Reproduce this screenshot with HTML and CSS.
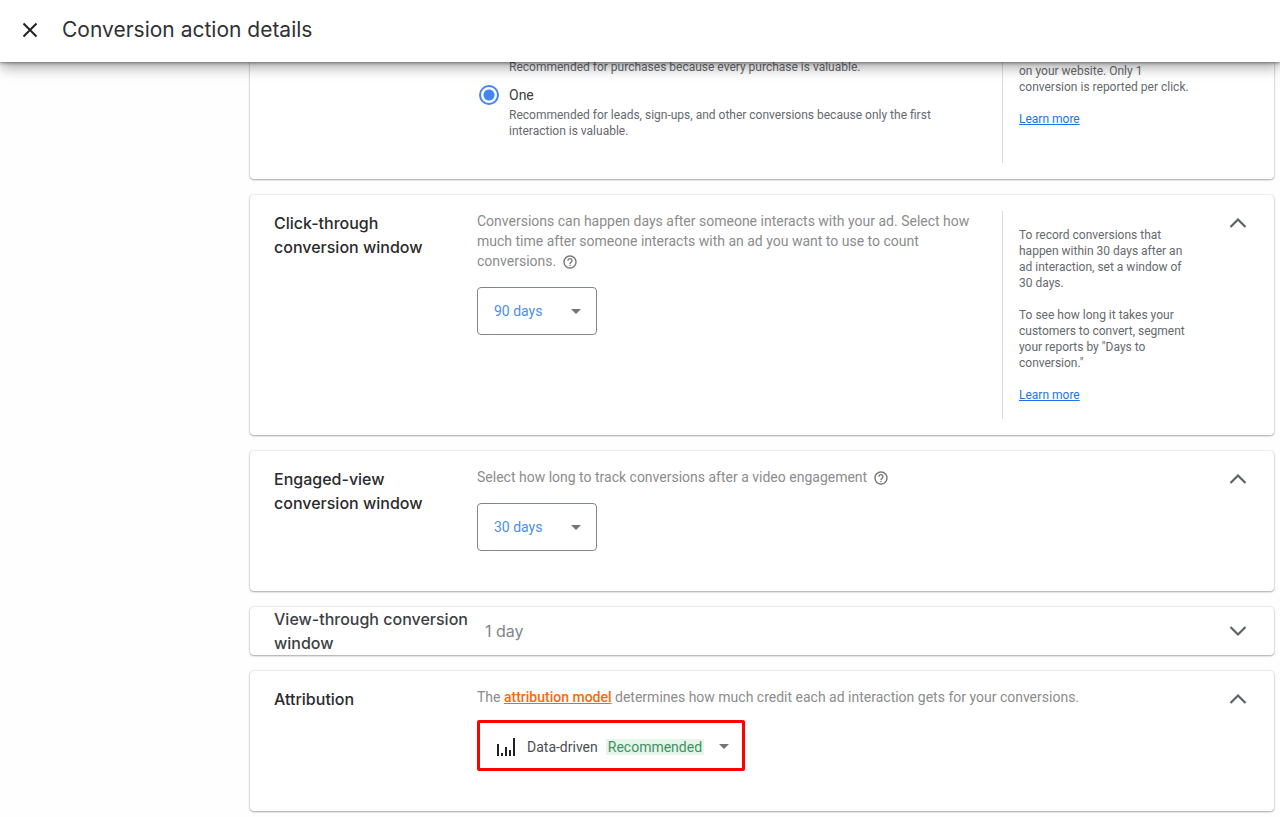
FILE: index.html
```html
<!DOCTYPE html>
<html lang="en">
<head>
    <meta charset="UTF-8">
    <meta name="viewport" content="width=device-width, initial-scale=1.0">
    <title>Conversion action details</title>
    <link rel="stylesheet" href="styles.css">
</head>
<body>

    <header class="top-bar">
        <button class="icon-button" aria-label="Close">
            <svg width="16" height="16" viewBox="0 0 16 16"><path d="M1.5 1.5 L14.5 14.5 M14.5 1.5 L1.5 14.5" fill="none" stroke="#202124" stroke-width="2"/></svg>
        </button>
        <h1>Conversion action details</h1>
    </header>

    <main>
        <!-- Count -->
        <section class="card count-card">
            <div class="card-content">
                <p class="option-note">Recommended for purchases because every purchase is valuable.</p>
                <div class="option">
                    <input type="radio" id="count-one" name="count" checked>
                    <label for="count-one">One</label>
                </div>
                <p class="option-note">Recommended for leads, sign-ups, and other conversions because only the first<br>interaction is valuable.</p>
            </div>
            <aside class="card-help">
                <p>on your website. Only 1<br>conversion is reported per click.</p>
                <a href="#">Learn more</a>
            </aside>
        </section>

        <!-- Click-through conversion window -->
        <section class="card">
            <h2>Click-through<br>conversion window</h2>
            <div class="card-content">
                <p class="description">Conversions can happen days after someone interacts with your ad. Select how<br>much time after someone interacts with an ad you want to use to count<br>conversions. <svg class="help-icon" viewBox="0 0 24 24"><path d="M11 18h2v-2h-2v2zm1-16C6.48 2 2 6.48 2 12s4.48 10 10 10 10-4.48 10-10S17.52 2 12 2zm0 18c-4.41 0-8-3.59-8-8s3.59-8 8-8 8 3.59 8 8-3.59 8-8 8zm0-14c-2.21 0-4 1.79-4 4h2c0-1.1.9-2 2-2s2 .9 2 2c0 2-3 1.75-3 5h2c0-2.25 3-2.5 3-5 0-2.21-1.79-4-4-4z"/></svg></p>
                <div class="select-box">
                    <select aria-label="Click-through conversion window">
                        <option>90 days</option>
                        <option>30 days</option>
                    </select>
                    <span class="arrow"></span>
                </div>
            </div>
            <aside class="card-help">
                <p>To record conversions that<br>happen within 30 days after an<br>ad interaction, set a window of<br>30 days.</p>
                <p>To see how long it takes your<br>customers to convert, segment<br>your reports by "Days to<br>conversion."</p>
                <a href="#">Learn more</a>
            </aside>
            <button class="icon-button toggle" aria-label="Collapse">
                <svg width="18" height="12" viewBox="0 0 18 12"><path d="M1.5 10 L9 2.5 L16.5 10" fill="none" stroke="#5f6368" stroke-width="2.2"/></svg>
            </button>
        </section>

        <!-- Engaged-view conversion window -->
        <section class="card">
            <h2>Engaged-view<br>conversion window</h2>
            <div class="card-content wide">
                <p class="description">Select how long to track conversions after a video engagement <svg class="help-icon" viewBox="0 0 24 24"><path d="M11 18h2v-2h-2v2zm1-16C6.48 2 2 6.48 2 12s4.48 10 10 10 10-4.48 10-10S17.52 2 12 2zm0 18c-4.41 0-8-3.59-8-8s3.59-8 8-8 8 3.59 8 8-3.59 8-8 8zm0-14c-2.21 0-4 1.79-4 4h2c0-1.1.9-2 2-2s2 .9 2 2c0 2-3 1.75-3 5h2c0-2.25 3-2.5 3-5 0-2.21-1.79-4-4-4z"/></svg></p>
                <div class="select-box">
                    <select aria-label="Engaged-view conversion window">
                        <option>30 days</option>
                        <option>3 days</option>
                    </select>
                    <span class="arrow"></span>
                </div>
            </div>
            <button class="icon-button toggle" aria-label="Collapse">
                <svg width="18" height="12" viewBox="0 0 18 12"><path d="M1.5 10 L9 2.5 L16.5 10" fill="none" stroke="#5f6368" stroke-width="2.2"/></svg>
            </button>
        </section>

        <!-- View-through conversion window -->
        <section class="card collapsed">
            <h2>View-through conversion<br>window</h2>
            <p class="summary">1 day</p>
            <button class="icon-button toggle" aria-label="Expand">
                <svg width="18" height="12" viewBox="0 0 18 12"><path d="M1.5 2 L9 9.5 L16.5 2" fill="none" stroke="#5f6368" stroke-width="2.2"/></svg>
            </button>
        </section>

        <!-- Attribution -->
        <section class="card">
            <h2>Attribution</h2>
            <div class="card-content wide">
                <p class="description">The <a class="model-link" href="#">attribution model</a> determines how much credit each ad interaction gets for your conversions.</p>
                <button class="model-button" aria-haspopup="listbox">
                    <svg width="18" height="18" viewBox="0 0 18 18" fill="#202124"><path d="M0 6h2v12H0z M4 15h2v3H4z M8 9h2v9H8z M12 12h2v6h-2z M16 0h2v18h-2z"/></svg>
                    <span>Data-driven</span>
                    <span class="badge">Recommended</span>
                    <span class="arrow"></span>
                </button>
            </div>
            <button class="icon-button toggle" aria-label="Collapse">
                <svg width="18" height="12" viewBox="0 0 18 12"><path d="M1.5 10 L9 2.5 L16.5 10" fill="none" stroke="#5f6368" stroke-width="2.2"/></svg>
            </button>
        </section>
    </main>

</body>
</html>
```
FILE: styles.css
```css
* {
    box-sizing: border-box;
}
body {
    margin: 0;
    background-color: #fefefe;
    font-family: Roboto, Arial, sans-serif;
    font-size: 14px;
    color: #3c4043;
}
h1, h2, p {
    margin: 0;
}
button {
    font-family: inherit;
    font-size: 14px;
    cursor: pointer;
}
.top-bar {
    position: sticky;
    top: 0;
    z-index: 2;
    display: flex;
    align-items: center;
    gap: 16px;
    height: 62px;
    padding: 0 14px 2px;
    background-color: #fff;
    box-shadow: 0 1px 3px rgba(0, 0, 0, 0.4), 0 4px 14px rgba(0, 0, 0, 0.4);
}
h1 {
    font-family: Inter, sans-serif;
    font-size: 21px;
    font-weight: 400;
    line-height: 28px;
    color: #303134;
}
.icon-button {
    display: flex;
    align-items: center;
    justify-content: center;
    width: 32px;
    height: 32px;
    padding: 0;
    border: none;
    background: none;
}
main {
    display: flex;
    flex-direction: column;
    gap: 16px;
    margin: -3px 6px 6px 250px; /* first card slides under the bar */
}
.card {
    display: grid;
    grid-template-columns: 203px 1fr 212px 48px;
    padding: 16px 12px 16px 24px;
    background-color: #fff;
    border-radius: 4px;
    box-shadow: 0 1px 2px rgba(60, 64, 67, 0.4), 0 0 2px rgba(60, 64, 67, 0.25);
}
h2 {
    font-family: Inter, sans-serif;
    font-size: 16px;
    font-weight: 500;
    line-height: 24px;
    color: #2a2b2e;
}
.card-content {
    grid-column: 2;
    padding-bottom: 24px;
}
.card-content.wide {
    grid-column: 2 / 4;
}
.description {
    line-height: 20px;
    color: #8c8c8c;
}
.help-icon {
    width: 16px;
    height: 16px;
    margin-left: 2px;
    vertical-align: -4px;
    fill: #757575;
}
.toggle {
    grid-column: 4;
    height: 24px;
    justify-self: center;
}

/* Count card */
.count-card {
    padding-top: 0;
}
.count-card .option-note {
    margin-left: 32px;
}
.count-card .card-help {
    padding-top: 4px;
}
.option {
    display: flex;
    align-items: center;
    gap: 10px;
    height: 20px;
    margin: 10px 0 2px 2px;
}
.option-note {
    font-size: 12px;
    line-height: 16px;
    color: #66696e;
}
.option input {
    appearance: none;
    width: 20px;
    height: 20px;
    margin: 0;
    border: 2px solid #4285f4;
    border-radius: 50%;
    background: radial-gradient(circle, #4285f4 5px, #fff 6px);
}

/* Help column on the right */
.card-help {
    grid-column: 3;
    padding: 16px 0 16px 16px;
    border-left: 1px solid #dadce0;
    font-size: 12px;
    line-height: 16px;
    color: #66696e;
}
.card-help p {
    margin-bottom: 16px;
}
.card-help a {
    color: #1a73e8;
}

/* Drop-downs */
.select-box {
    position: relative;
    width: 120px;
    height: 48px;
    margin-top: 16px;
}
.select-box select {
    appearance: none;
    width: 100%;
    height: 100%;
    padding: 0 16px;
    border: 1px solid #80868b;
    border-radius: 4px;
    background-color: #fff;
    font-family: inherit;
    font-size: 14px;
    color: #4a90e8;
}
.arrow {
    border: 5px solid transparent;
    border-top-color: #757575;
    border-bottom: none;
}
.select-box .arrow {
    position: absolute;
    top: 22px;
    right: 16px;
    pointer-events: none;
}
.model-link {
    color: #f56a0a;
    font-weight: 500;
}
.model-button {
    display: flex;
    align-items: center;
    width: 268px;
    height: 51px;
    margin-top: 13px;
    padding: 2px 13px 0 17px;
    border: 3px solid #f00;
    border-radius: 2px;
    background-color: #fff;
    color: #4a4d51;
}
.model-button svg {
    margin-right: 12px;
}
.badge {
    margin-left: 8px;
    padding: 0 2px;
    background-color: #e6f4ea;
    color: #3f9160;
}
.model-button .arrow {
    margin-left: auto;
}

.collapsed {
    align-items: center;
    padding-top: 0;
    padding-bottom: 0;
}
.collapsed h2 {
    color: #3c4043;
    white-space: nowrap;
}
.summary {
    padding-left: 8px;
    font-family: Inter, sans-serif;
    font-size: 16px;
    line-height: 24px;
    color: #80868b;
}
```
